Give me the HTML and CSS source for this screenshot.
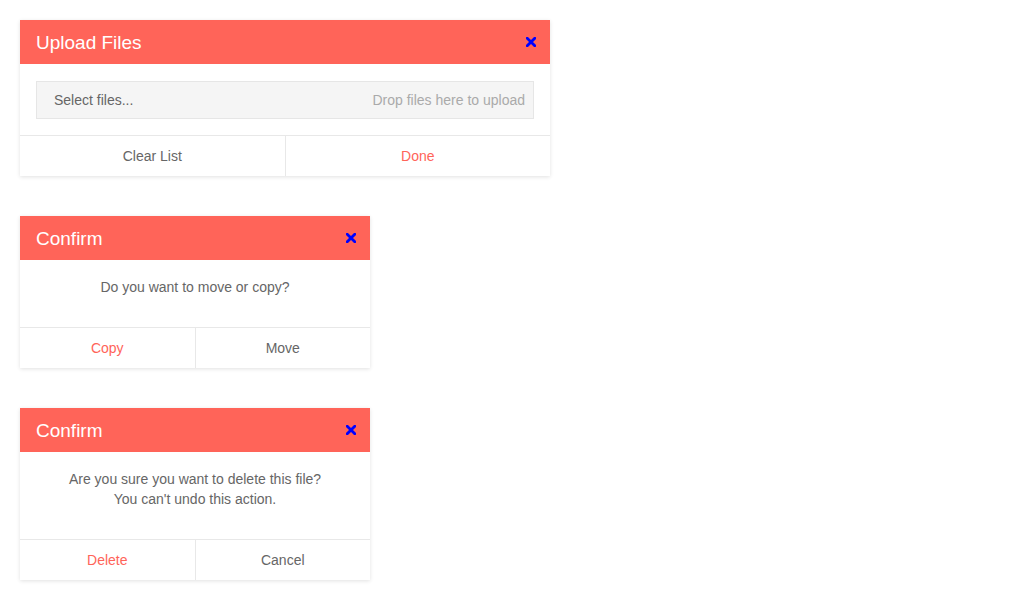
FILE: index.html
```html
<!DOCTYPE html>
<html>
<head>
<meta charset="utf-8">
<link rel="stylesheet" href="styles.css">
</head>
<body>
<div class="page">
  <div class="dialog wide">
    <div class="dialog-header">
      <span class="dialog-title">Upload Files</span>
      <a class="dialog-close"><svg width="10" height="10" viewBox="0 0 10 10"><path d="M1.2 1.2L8.8 8.8M8.8 1.2L1.2 8.8" stroke="#0000ff" stroke-width="2.8" stroke-linecap="square"/></svg></a>
    </div>
    <div class="dialog-body upload-body">
      <div class="dropzone">
        <span class="select">Select files...</span>
        <span class="hint">Drop files here to upload</span>
      </div>
    </div>
    <div class="dialog-footer">
      <button class="btn">Clear List</button>
      <button class="btn primary">Done</button>
    </div>
  </div>

  <div class="dialog">
    <div class="dialog-header">
      <span class="dialog-title">Confirm</span>
      <a class="dialog-close"><svg width="10" height="10" viewBox="0 0 10 10"><path d="M1.2 1.2L8.8 8.8M8.8 1.2L1.2 8.8" stroke="#0000ff" stroke-width="2.8" stroke-linecap="square"/></svg></a>
    </div>
    <div class="dialog-body message">
      <p>Do you want to move or copy?</p>
    </div>
    <div class="dialog-footer">
      <button class="btn primary">Copy</button>
      <button class="btn">Move</button>
    </div>
  </div>

  <div class="dialog">
    <div class="dialog-header">
      <span class="dialog-title">Confirm</span>
      <a class="dialog-close"><svg width="10" height="10" viewBox="0 0 10 10"><path d="M1.2 1.2L8.8 8.8M8.8 1.2L1.2 8.8" stroke="#0000ff" stroke-width="2.8" stroke-linecap="square"/></svg></a>
    </div>
    <div class="dialog-body message">
      <p>Are you sure you want to delete this file?<br>You can't undo this action.</p>
    </div>
    <div class="dialog-footer">
      <button class="btn primary">Delete</button>
      <button class="btn">Cancel</button>
    </div>
  </div>
</div>
</body>
</html>
```
FILE: styles.css
```css
* { box-sizing: border-box; }
html, body { margin: 0; padding: 0; background: #fff; }
body { font-family: "Liberation Sans", Arial, sans-serif; color: #666; }
.page {
  padding: 20px;
  display: flex;
  flex-direction: column;
  align-items: flex-start;
  gap: 40px;
}
.dialog {
  width: 350px;
  background: #fff;
  box-shadow: 0 1px 4px rgba(0,0,0,0.12);
}
.dialog.wide { width: 530px; }
.dialog-header {
  height: 44px;
  background: #ff6459;
  display: flex;
  align-items: center;
  justify-content: space-between;
  padding: 0 14px 0 16px;
}
.dialog-title {
  color: #fff;
  font-size: 19px;
  line-height: 24px;
  padding-top: 1px;
}
.dialog-close { display: flex; width: 10px; height: 10px; cursor: pointer; }
.dialog-body { border-bottom: 1px solid #e8e8e8; }
.upload-body { padding: 17px 16px 16px; }
.dropzone {
  height: 38px;
  background: #f5f5f5;
  border: 1px solid #e6e6e6;
  display: flex;
  align-items: center;
  justify-content: space-between;
  padding: 0 8px 0 17px;
  font-size: 14px;
}
.dropzone .select { color: #666; }
.dropzone .hint { color: #aaa; }
.message { padding: 17px 16px 30px; text-align: center; }
.message p { margin: 0; font-size: 14px; line-height: 20px; color: #666; }
.dialog-footer { display: flex; height: 40px; }
.btn {
  flex: 1;
  border: 0;
  background: #fff;
  font-family: inherit;
  font-size: 14px;
  color: #666;
  padding: 0;
}
.btn + .btn { border-left: 1px solid #e8e8e8; }
.btn.primary { color: #ff6459; }
```
